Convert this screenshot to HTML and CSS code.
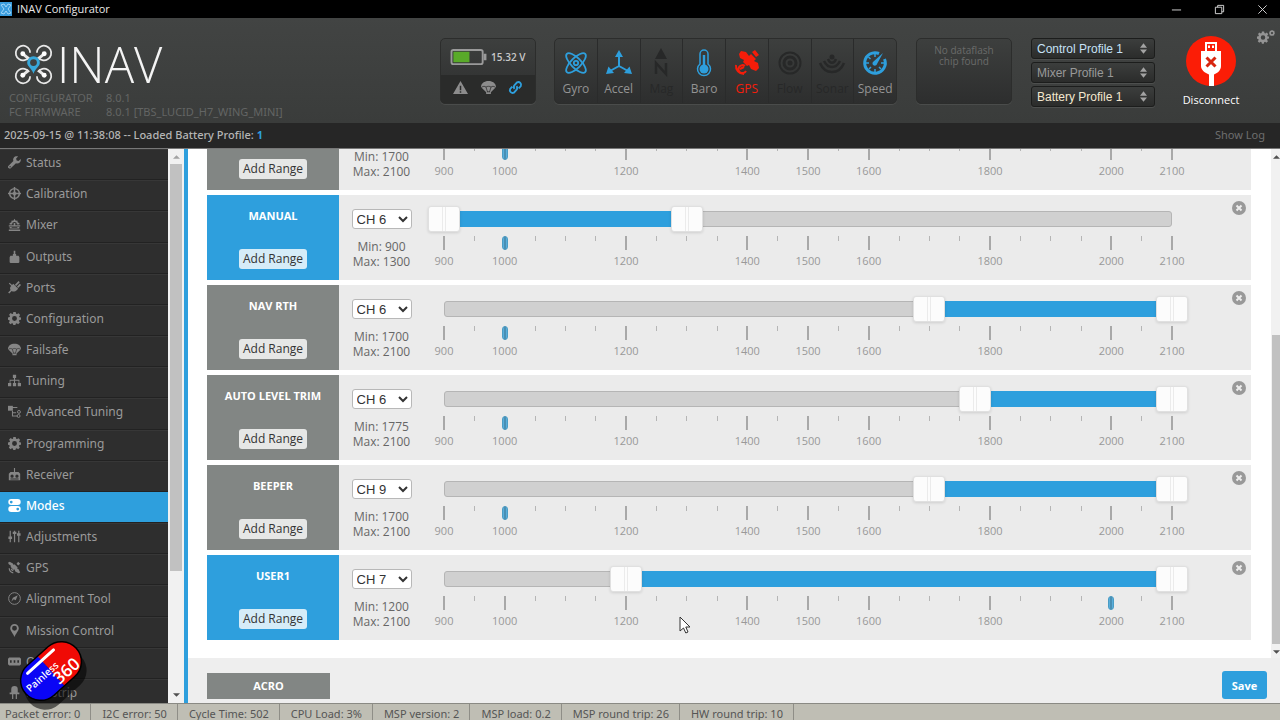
FILE: index.html
```
<!DOCTYPE html>
<html lang="en">
<head>
    <meta charset="UTF-8">
    <meta name="viewport" content="width=device-width, initial-scale=1.0">
    <title>INAV Configurator</title>
    <link rel="stylesheet" href="styles.css">
</head>
<body>
    <svg class="sprite" aria-hidden="true">
        <symbol id="i-wrench" viewBox="0 0 16 16"><path d="M15.600 3.600l-2.600 2.400-2.400-.6-.6-2.400L12.400.5C10.500-.2 8.300.3 7.100 2c-.9 1.200-1 2.700-.5 4L.7 11.900a2 2 0 0 0 0 2.900c.8.9 2.200.8 3 0L9.800 9c1.600.6 3.400.2 4.700-1 1.200-1.200 1.600-2.900 1.100-4.400zM2.600 14a.8.8 0 1 1 0-1.600.8.8 0 0 1 0 1.600z"/></symbol>
        <symbol id="i-target" viewBox="0 0 16 16"><path fill="none" stroke="currentColor" stroke-width="1.800" d="M8 2a6 6 0 1 0 0 12A6 6 0 0 0 8 2zM8 0v5M8 11v5M0 8h5M11 8h5"/><path d="M8 3.500l1.500 3 3 1.500-3 1.500-1.500 3-1.500-3-3-1.500 3-1.500z"/></symbol>
        <symbol id="i-mixer" viewBox="0 0 16 16"><path d="M2 6l2-.5L4.500 3l2 .5L8 1l1.500 2.500 2-.5.5 2.500 2 .5v2h-3a3 3 0 0 0-6 0H2zM1 9h14v1.500H1zM2 11h2l1 1h6l1-1h2v2H2zM1 14h14v2H1zM7 6h2v4H7z"/></symbol>
        <symbol id="i-motor" viewBox="0 0 16 16"><path d="M7 1h2v4h1v2h3l1 2v6l-1 1H3l-1-1V9l1-2h3V5h1z"/></symbol>
        <symbol id="i-plug" viewBox="0 0 16 16"><path d="M1 3l1-1 3 3 1.500-1.500 6 6L11 11c-2 2-4.500 2.500-6.500 1.300L1.500 15.500l-1.300-1.300 3-3C2 9 2.500 7 4 6zM8.500 4.500L13 0l1.500 1.500L10 6zM11 7l3.500-3.500L16 5l-3.500 3.500z"/></symbol>
        <symbol id="i-gear" viewBox="0 0 16 16"><path fill-rule="evenodd" d="M6.500 0h3l.4 2 1.300.6L13 1.400 15 3.600l-1.300 1.700.4 1.200 1.900.3v2.600l-2 .4-.6 1.300 1.200 1.800-2.100 2.100-1.700-1.200-1.300.6-.4 1.900H6.500l-.4-2-1.300-.5L3 15 1 12.900l1.200-1.700L1.700 10 0 9.500V6.700l2-.4.500-1.200L1.300 3.400 3.300 1.300 5 2.500l1.200-.5zM8 5a3 3 0 1 0 0 6 3 3 0 0 0 0-6z"/></symbol>
        <symbol id="i-chute" viewBox="0 0 16 16"><path d="M0 7C.3 3.500 3.500 1 8 1s7.700 2.500 8 6l-1 1.500L10.500 13v2h-5v-2L1 8.500z"/><path fill="none" stroke="#2e2e2e" stroke-width=".8" d="M1 7.500c1.500-1 3-1 4.300 0 1.500-1 4-1 5.400 0 1.300-1 2.800-1 4.300 0M5.300 7.500L7 13M10.700 7.500L9 13M6.500 12.500h3"/></symbol>
        <symbol id="i-tree" viewBox="0 0 16 16"><path d="M6 1h4v4H8.700v2H14v4h2v4h-4v-4h1V8.300H8.700V11H10v4H6v-4h1.300V8.300H3V11h1v4H0v-4h2V7h5.300V5H6z"/></symbol>
        <symbol id="i-nodes" viewBox="0 0 16 16"><path d="M0 1h6v6H0z"/><path fill="none" stroke="currentColor" stroke-width="1.300" d="M3 3h8.500M5.500 7v6.500H12M5.500 9.500H10"/><circle cx="13.500" cy="8.500" r="1.800" fill="none" stroke="currentColor" stroke-width="1.200"/><circle cx="13" cy="13.500" r="1.800" fill="none" stroke="currentColor" stroke-width="1.200"/></symbol>
        <symbol id="i-receiver" viewBox="0 0 16 16"><path fill-rule="evenodd" d="M7.300 0h1.400v5H13l2 2v8H1V7l2-2h4.300zM5 8a2 2 0 1 0 0 4 2 2 0 0 0 0-4zm6 0a2 2 0 1 0 0 4 2 2 0 0 0 0-4zM3 13v1h10v-1z"/></symbol>
        <symbol id="i-modes" viewBox="0 0 16 16"><path fill-rule="evenodd" d="M4 0h8a3.500 3.500 0 0 1 0 7.300H4A3.500 3.500 0 0 1 4 0zm0 2a1.700 1.700 0 1 0 0 3.400A1.700 1.700 0 0 0 4 2zm0 6.700h8a3.500 3.500 0 0 1 0 7.300H4a3.500 3.500 0 0 1 0-7.300zm8 2a1.700 1.700 0 1 0 0 3.400 1.700 1.700 0 0 0 0-3.400z"/></symbol>
        <symbol id="i-sliders" viewBox="0 0 16 16"><path d="M2 1h1.500v7H5v3H3.500v4H2v-4H.5V8H2zM7.300 1h1.500v1h1.500v3H8.800v10H7.300V5H5.800V2h1.500zM12.500 1H14v3h1.500v3H14v8h-1.500V7H11V4h1.500z"/></symbol>
        <symbol id="i-sat" viewBox="0 0 16 16"><path d="M2 1l4 2 1 2 1-1 4 4-1 1 2 1 2 4-2 1-4-2-1-3-1 1-4-4 1-1-3-2-1-2z"/><path fill="none" stroke="currentColor" stroke-width="1.500" d="M1.500 9a6 6 0 0 0 5 5.500M4 9.500A4 4 0 0 0 6.500 12"/><path d="M10.500 3.500l2-2.500L15 3.500l-2.500 2z"/></symbol>
        <symbol id="i-compass" viewBox="0 0 16 16"><circle cx="8" cy="8" r="7.200" fill="none" stroke="currentColor" stroke-width="1.200"/><path d="M12 4l-2.500 6L7 9l-3 3 2-5z"/></symbol>
        <symbol id="i-pin" viewBox="0 0 16 16"><path fill-rule="evenodd" d="M8 0a5.300 5.300 0 0 1 5.300 5.300C13.300 9 9.500 11.500 8 16 6.500 11.500 2.700 9 2.700 5.300A5.300 5.300 0 0 1 8 0zm0 2.300a3 3 0 1 0 0 6 3 3 0 0 0 0-6z"/></symbol>
        <symbol id="i-osd" viewBox="0 0 16 16"><path fill-rule="evenodd" d="M1.500 3h13L16 4.500v7L14.500 13h-13L0 11.500v-7zM2.500 6.500v3h2v-3zm4.500 0v3h2v-3zm4.500 0v3h2v-3z"/></symbol>
        <symbol id="i-led" viewBox="0 0 16 16"><path d="M4 8V4a4 4 0 0 1 8 0v4h2v2h-3v6H9.500v-6h-3v6H5v-6H2V8z"/></symbol>
    </svg>

    <div class="titlebar">
        <svg class="app-icon" viewBox="0 0 12 14"><rect width="12" height="14" fill="#3a9cdc"/><path d="M1 3l3-1 2 3 2-3 3 1-3 4 3 4-3 1-2-3-2 3-3-1 3-4z" fill="none" stroke="#9fd4f5"/></svg>
        <span class="app-name">INAV Configurator</span>
        <div class="window-buttons">
            <button aria-label="Minimize"><svg viewBox="0 0 12 12"><path d="M1 6.500h10"/></svg></button>
            <button aria-label="Restore"><svg viewBox="0 0 12 12"><path d="M1.500 3.500h7v7h-7zM4 3.500v-2h6.500v7h-2"/></svg></button>
            <button aria-label="Close"><svg viewBox="0 0 12 12"><path d="M1.500 1.500l9 9M10.500 1.500l-9 9"/></svg></button>
        </div>
    </div>

    <header class="header">
        <div class="brand">
            <div class="logo">
                <svg viewBox="0 0 40 40">
                    <g fill="none" stroke="#e8e8e8" stroke-width="1.800">
                        <path d="M15.500 12.500a7.500 7.500 0 1 1-3-11 7.500 7.500 0 0 1 4 6.500M24.500 12.500a7.500 7.500 0 1 0 3-11 7.500 7.500 0 0 0-4 6.500M15.500 27.500a7.500 7.500 0 1 0-3 11 7.500 7.500 0 0 0 4-6.500M24.500 27.500a7.500 7.500 0 1 1 3 11 7.500 7.500 0 0 1-4-6.500"/>
                        <path stroke-width="3" d="M9 9l6 5M31 9l-6 5M9 31l6-5M31 31l-6-5"/>
                    </g>
                    <g fill="#fff"><circle cx="9" cy="9" r="2.500"/><circle cx="31" cy="9" r="2.500"/><circle cx="9" cy="31" r="2.500"/><circle cx="31" cy="31" r="2.500"/></g>
                    <path fill="#37a8db" fill-rule="evenodd" d="M20 11.500a6.500 6.500 0 0 1 6.500 6.500c0 4-4.500 6-6.500 11.500C18 24 13.500 22 13.500 18a6.500 6.500 0 0 1 6.500-6.500zm0 3a3.500 3.500 0 1 0 0 7 3.500 3.500 0 0 0 0-7z"/>
                </svg>
                <span>INAV</span>
            </div>
            <dl class="versions">
                <dt>CONFIGURATOR</dt><dd>8.0.1</dd>
                <dt>FC FIRMWARE</dt><dd>8.0.1 [TBS_LUCID_H7_WING_MINI]</dd>
            </dl>
        </div>

        <div class="panel quad-status">
            <div class="battery">
                <svg viewBox="0 0 38 18"><rect x="1" y="1" width="33" height="15" rx="2" fill="none" stroke="#9a9a9a" stroke-width="2"/><path fill="#9a9a9a" d="M35 5h3v7h-3z"/><path fill="#59aa29" d="M3 3h17v11H3z"/></svg>
                <span>15.32 V</span>
            </div>
            <div class="flags">
                <svg viewBox="0 0 16 16"><path fill-rule="evenodd" d="M8 1l8 14H0zM7.200 6v5h1.600V6zm0 6v1.700h1.600V12z"/></svg>
                <svg><use href="#i-chute"/></svg>
                <svg class="link-ok" viewBox="0 0 16 16"><path fill="none" stroke="currentColor" stroke-width="2" d="M7 9.500a3 3 0 0 1 0-4L9.700 2.500a3 3 0 0 1 4 4L11.500 9M9 6.500a3 3 0 0 1 0 4l-2.700 3a3 3 0 0 1-4-4L4.500 7"/></svg>
            </div>
        </div>

        <ul class="panel sensors">
            <li class="on">
                <svg viewBox="0 0 24 24"><g fill="none" stroke="currentColor" stroke-width="1.800"><ellipse cx="12" cy="12" rx="13" ry="5" transform="rotate(45 12 12)"/><ellipse cx="12" cy="12" rx="13" ry="5" transform="rotate(-45 12 12)"/><circle cx="12" cy="12" r="2.200"/></g></svg>
                <span>Gyro</span>
            </li>
            <li class="on">
                <svg viewBox="0 0 24 24"><path fill="none" stroke="currentColor" stroke-width="2" d="M12 4v11M12 15L3 20M12 15l9 5"/><path d="M12-1l4 7H8zM-1 23l2.500-7.500L7 22zM25 23l-2.500-7.500L17 22z"/></svg>
                <span>Accel</span>
            </li>
            <li>
                <svg viewBox="0 0 24 24"><path d="M12-3l6 11H6z"/><path fill="none" stroke="currentColor" stroke-width="2.500" d="M7 23V12l10 11V12"/></svg>
                <span>Mag</span>
            </li>
            <li class="on">
                <svg viewBox="0 0 24 24"><path fill="none" stroke="currentColor" stroke-width="1.500" d="M8 13V3a4 4 0 0 1 8 0v10a6.500 6.500 0 1 1-8 0z"/><circle cx="12" cy="18" r="4.500"/><path d="M10.800 4h2.400v12h-2.400z"/></svg>
                <span>Baro</span>
            </li>
            <li class="error">
                <svg viewBox="0 0 24 24"><path d="M6 0l5 1 3 4 2-2 5 5-2 2 4 2 1 5-3 3-5-2-2-4-2 1-4-4 1-2-4-2-1-4zM17 1l3-2 4 5-3 2z"/><path fill="none" stroke="currentColor" stroke-width="2" d="M1 14a8 8 0 0 0 8 9M10 15a4 4 0 1 0 1 5M5 18l4-2"/></svg>
                <span>GPS</span>
            </li>
            <li>
                <svg viewBox="0 0 24 24"><g fill="none" stroke="currentColor"><circle cx="12" cy="12" r="10.500" stroke-width="2"/><circle cx="12" cy="12" r="6" stroke-width="3"/></g><circle cx="12" cy="12" r="2.500"/></svg>
                <span>Flow</span>
            </li>
            <li>
                <svg viewBox="0 0 24 24"><path fill="none" stroke="currentColor" stroke-width="2.500" d="M0 12c5 12 19 12 24 0M4 10c4 8 12 8 16 0M8 8c2 5 6 5 8 0"/><circle cx="12" cy="6" r="2.500"/></svg>
                <span>Sonar</span>
            </li>
            <li class="on">
                <svg viewBox="0 0 24 24"><path fill="none" stroke="currentColor" stroke-width="3" d="M16 2.500A10.300 10.300 0 1 0 21.500 8"/><path fill="none" stroke="currentColor" stroke-width="1.500" d="M12 3v3M3 12h3M18 12h3M5.500 6l2 2M6 18l2-2M18 18l-2-2M12 18v3"/><path d="M20 2l-6 11a2.300 2.300 0 1 1-3.500-2.500z"/></svg>
                <span>Speed</span>
            </li>
        </ul>

        <div class="panel dataflash">No dataflash<br>chip found</div>

        <div class="profiles">
            <div class="profile control">
                <select aria-label="Control profile"><option>Control Profile 1</option></select>
                <svg viewBox="0 0 8 12"><path d="M4 0l4 5H0zM0 7h8l-4 5z"/></svg>
            </div>
            <div class="profile mixer">
                <select aria-label="Mixer profile"><option>Mixer Profile 1</option></select>
                <svg viewBox="0 0 8 12"><path d="M4 0l4 5H0zM0 7h8l-4 5z"/></svg>
            </div>
            <div class="profile battery-profile">
                <select aria-label="Battery profile"><option>Battery Profile 1</option></select>
                <svg viewBox="0 0 8 12"><path d="M4 0l4 5H0zM0 7h8l-4 5z"/></svg>
            </div>
        </div>

        <button class="connect">
            <svg viewBox="0 0 50 50">
                <circle cx="25" cy="25" r="25" fill="#fb1d06"/>
                <path fill="#fff" fill-rule="evenodd" d="M19 6h12v9h4v15c0 4-3 7-7 8.500V50h-5V38.500c-4-1.500-8-4.500-8-8.500V15h4zm2 2v7h8V8zm1 1.500h2V12h-2zm4 0h2V12h-2z"/>
                <path stroke="#d8260f" stroke-width="3" d="M20.500 21.500l9 9M29.500 21.500l-9 9"/>
            </svg>
            <span>Disconnect</span>
        </button>

        <button class="options" aria-label="Options">
            <svg viewBox="0 0 18 14"><use href="#i-gear" y="1" width="12" height="13"/><use href="#i-gear" x="12" y="0" width="6" height="6"/></svg>
        </button>
    </header>

    <div class="log">
        <p>2025-09-15 @ 11:38:08 -- Loaded Battery Profile: <strong>1</strong></p>
        <a href="#">Show Log</a>
    </div>

    <div class="workspace">
        <nav class="tabs">
            <ul>
                <li><a href="#"><svg><use href="#i-wrench"/></svg>Status</a></li>
                <li><a href="#"><svg><use href="#i-target"/></svg>Calibration</a></li>
                <li><a href="#"><svg><use href="#i-mixer"/></svg>Mixer</a></li>
                <li><a href="#"><svg><use href="#i-motor"/></svg>Outputs</a></li>
                <li><a href="#"><svg><use href="#i-plug"/></svg>Ports</a></li>
                <li><a href="#"><svg><use href="#i-gear"/></svg>Configuration</a></li>
                <li><a href="#"><svg><use href="#i-chute"/></svg>Failsafe</a></li>
                <li><a href="#"><svg><use href="#i-tree"/></svg>Tuning</a></li>
                <li><a href="#"><svg><use href="#i-nodes"/></svg>Advanced Tuning</a></li>
                <li><a href="#"><svg><use href="#i-gear"/></svg>Programming</a></li>
                <li><a href="#"><svg><use href="#i-receiver"/></svg>Receiver</a></li>
                <li class="active"><a href="#"><svg><use href="#i-modes"/></svg>Modes</a></li>
                <li><a href="#"><svg><use href="#i-sliders"/></svg>Adjustments</a></li>
                <li><a href="#"><svg><use href="#i-sat"/></svg>GPS</a></li>
                <li><a href="#"><svg><use href="#i-compass"/></svg>Alignment Tool</a></li>
                <li><a href="#"><svg><use href="#i-pin"/></svg>Mission Control</a></li>
                <li><a href="#"><svg><use href="#i-osd"/></svg>OSD</a></li>
                <li><a href="#"><svg><use href="#i-led"/></svg>LED Strip</a></li>
            </ul>
        </nav>
        <div class="scrollbar tabs-scroll">
            <svg viewBox="0 0 8 4"><path d="M0 4l4-4 4 4z"/></svg>
            <div class="scroll-thumb"></div>
            <svg viewBox="0 0 8 4"><path d="M0 0h8L4 4z"/></svg>
        </div>

        <main class="content">
            <div class="content-scroll">
                <div id="modes" class="modes"></div>
                <div class="scrollbar content-bar">
                    <svg viewBox="0 0 8 4"><path d="M0 4l4-4 4 4z"/></svg>
                    <div class="scroll-thumb"></div>
                    <svg viewBox="0 0 8 4"><path d="M0 0h8L4 4z"/></svg>
                </div>
            </div>
            <div class="toolbar">
                <div class="acro">ACRO</div>
                <button class="save">Save</button>
            </div>
        </main>
    </div>

    <footer class="status-bar">
        <span>Packet error: 0</span>
        <span>I2C error: 50</span>
        <span>Cycle Time: 502</span>
        <span>CPU Load: 3%</span>
        <span>MSP version: 2</span>
        <span>MSP load: 0.2</span>
        <span>MSP round trip: 26</span>
        <span>HW round trip: 10</span>
    </footer>

    <svg class="pill" viewBox="0 0 72 72">
        <g transform="rotate(-42 31 31)">
            <rect x="-6" y="20" width="69" height="41" rx="20" fill="#000" opacity=".55"/>
            <path fill="#f00a05" d="M31 11h14a20 20 0 0 1 0 40H31z"/>
            <path fill="#0a05f5" d="M31 11H17a20 20 0 0 0 0 40h14z"/>
            <rect x="-3" y="11" width="68" height="40" rx="20" fill="none" stroke="#000" stroke-width="1.500"/>
            <path stroke="#fff" stroke-width="3" stroke-linecap="round" d="M12 17h35"/>
            <text x="1" y="33" class="pill-name">Painless</text>
            <text x="28" y="47" class="pill-number">360</text>
        </g>
    </svg>

    <svg class="cursor" viewBox="0 0 12 18"><path d="M1 1v14l3.500-3 2.300 5 2.200-1-2.200-5H11z" fill="#fff" stroke="#333"/></svg>

    <script>
        const MIN = 900;
        const MAX = 2100;
        const labels = [900, 1000, 1200, 1400, 1500, 1600, 1800, 2000, 2100];

        const modes = [
            { name: 'NAV POSHOLD', channel: 6, min: 1700, max: 2100, value: 1000, active: false },
            { name: 'MANUAL', channel: 6, min: 900, max: 1300, value: 1000, active: true },
            { name: 'NAV RTH', channel: 6, min: 1700, max: 2100, value: 1000, active: false },
            { name: 'AUTO LEVEL TRIM', channel: 6, min: 1775, max: 2100, value: 1000, active: false },
            { name: 'BEEPER', channel: 9, min: 1700, max: 2100, value: 1000, active: false },
            { name: 'USER1', channel: 7, min: 1200, max: 2100, value: 2000, active: true }
        ];

        // Position of a channel value along the track, in percent
        function percent(value) {
            return (value - MIN) / (MAX - MIN) * 100;
        }

        function ticks() {
            let html = '';
            for (let v = MIN; v <= MAX; v += 50) {
                const labelled = labels.includes(v);
                html += `<span class="tick${labelled ? ' major' : ''}" style="left:${percent(v)}%">${labelled ? v : ''}</span>`;
            }
            return html;
        }

        document.getElementById('modes').innerHTML = modes.map(mode => `
            <section class="mode${mode.active ? ' active' : ''}">
                <div class="mode-name">
                    <h2>${mode.name}</h2>
                    <button class="add-range">Add Range</button>
                </div>
                <div class="channel">
                    <select aria-label="${mode.name} channel"><option>CH ${mode.channel}</option></select>
                    <p>Min: ${mode.min}<br>Max: ${mode.max}</p>
                </div>
                <div class="range">
                    <div class="track">
                        <div class="fill" style="left:${percent(mode.min)}%;width:${percent(mode.max) - percent(mode.min)}%"></div>
                        <input type="range" aria-label="${mode.name} minimum" min="${MIN}" max="${MAX}" step="25" value="${mode.min}">
                        <input type="range" aria-label="${mode.name} maximum" min="${MIN}" max="${MAX}" step="25" value="${mode.max}">
                    </div>
                    <div class="scale">
                        ${ticks()}
                        <span class="marker" style="left:${percent(mode.value)}%"></span>
                    </div>
                </div>
                <button class="remove" aria-label="Remove range">
                    <svg viewBox="0 0 14 14"><circle cx="7" cy="7" r="7" fill="#999"/><path d="M4.500 4.500l5 5M9.500 4.500l-5 5" stroke="#eee" stroke-width="2"/></svg>
                </button>
            </section>
        `).join('');
    </script>
</body>
</html>
```
FILE: styles.css
```
:root {
    --blue: #2e9fdd;
    --dark: #2e2e2e;
    --grey: #828684;
    --row: #ebebeb;
}

* {
    margin: 0;
    padding: 0;
    box-sizing: border-box;
}

body {
    display: flex;
    flex-direction: column;
    height: 100vh;
    overflow: hidden;
    font-family: "Open Sans", "Noto Sans", sans-serif;
    font-size: 12px;
    color: #666;
    background-color: #fff;
}

button {
    font-family: inherit;
    font-size: 12px;
    border: none;
    background: none;
    cursor: pointer;
}

a {
    color: inherit;
    text-decoration: none;
}

ul {
    list-style: none;
}

svg {
    display: block;
    fill: currentColor;
    overflow: visible;
}

.sprite {
    position: absolute;
    width: 0;
    height: 0;
}

.versions,
.log,
.tabs,
.status-bar {
    font-family: "Noto Sans", "Open Sans", sans-serif;
}

/* Window title bar */
.titlebar {
    display: flex;
    align-items: center;
    flex: none;
    height: 18px;
    background-color: #000;
    color: #e8e8e8;
}

.app-icon {
    width: 12px;
    height: 14px;
    margin-right: 5px;
}

.app-name {
    flex: 1;
    font-size: 11px;
    line-height: 16px;
}

.window-buttons {
    display: flex;
    gap: 32px;
    padding-right: 12px;
}

.window-buttons button {
    width: 11px;
    height: 16px;
    color: #ddd;
}

.window-buttons svg {
    width: 11px;
    height: 11px;
    fill: none;
    stroke: currentColor;
}

/* Header */
.header {
    display: flex;
    align-items: flex-start;
    flex: none;
    height: 105px;
    padding: 20px 5px 0 9px;
    background: linear-gradient(#424443, #3a3c3b);
}

.brand {
    flex: 1;
}

.logo {
    display: flex;
    align-items: center;
    gap: 4px;
    height: 53px;
    padding-left: 5px;
    color: #f4f4f4;
    font-size: 49px;
    font-weight: 300;
    line-height: 53px;
}

.logo svg {
    width: 39px;
    height: 39px;
}

.versions {
    display: grid;
    grid-template-columns: 97px 1fr;
    font-size: 11px;
    line-height: 14px;
    color: #636564;
}

.panel {
    height: 66px;
    border: 1px solid #2c2d2c;
    border-radius: 5px;
    background: linear-gradient(#3d3f3e, #2d2e2e);
    box-shadow: 0 1px 0 #4a4c4b;
}

.quad-status {
    display: flex;
    flex-direction: column;
    width: 96px;
    margin-right: 18px;
    overflow: hidden;
}

.battery {
    display: flex;
    align-items: center;
    gap: 4px;
    height: 36px;
    padding-left: 9px;
    color: #c9c9c9;
    font-size: 10px;
    font-weight: 600;
}

.battery svg {
    width: 37px;
    height: 17px;
}

.flags {
    display: flex;
    align-items: center;
    justify-content: space-evenly;
    flex: 1;
    padding-bottom: 4px;
    background-color: #2a2b2a;
    color: #8c8c8c;
}

.flags svg {
    width: 15px;
    height: 15px;
}

.flags .link-ok {
    color: var(--blue);
}

.sensors {
    display: flex;
    width: 343px;
    margin-right: 19px;
}

.sensors li {
    display: flex;
    flex-direction: column;
    align-items: center;
    flex: 1;
    gap: 6px;
    padding-top: 12px;
    border-right: 1px solid #2a2b2b;
    color: #272828;
    line-height: 16px;
}

.sensors li:last-child {
    border-right: none;
}

.sensors svg {
    width: 24px;
    height: 24px;
}

.sensors .on svg {
    color: var(--blue);
}

.sensors .on span {
    color: #949494;
}

.sensors .error {
    color: #f51d0a;
}

.dataflash {
    width: 96px;
    margin-right: 19px;
    padding-top: 6px;
    color: #6a6b6a;
    font-size: 10px;
    line-height: 11px;
    text-align: center;
}

.profiles {
    display: flex;
    flex-direction: column;
    gap: 3px;
    width: 124px;
    margin-right: 19px;
}

.profile {
    position: relative;
    color: #a3a3a3;
}

.profile select {
    display: block;
    width: 100%;
    height: 21px;
    padding-left: 5px;
    appearance: none;
    border: 1px solid #1c1d1c;
    border-radius: 3px;
    background: linear-gradient(#3c3e3d, #2b2c2b);
    box-shadow: 0 1px 0 #4d4f4e;
    color: #999;
    font-family: "Liberation Sans", sans-serif;
    font-size: 12px;
}

.control select {
    color: #c6e2f7;
}

.battery-profile select {
    color: #f4e8cf;
}

.profile svg {
    position: absolute;
    top: 5px;
    right: 8px;
    width: 7px;
    height: 11px;
    pointer-events: none;
}

.connect {
    display: flex;
    flex-direction: column;
    align-items: center;
    gap: 6px;
    width: 74px;
    margin-top: -2px;
    color: #fff;
    font-size: 11px;
    line-height: 16px;
}

.connect svg {
    width: 50px;
    height: 50px;
}

.options {
    margin: -8px 0 0 9px;
    color: #949494;
}

.options svg {
    width: 18px;
    height: 14px;
}

/* Log line */
.log {
    display: flex;
    align-items: center;
    justify-content: space-between;
    flex: none;
    height: 26px;
    padding: 0 15px 2px 4px;
    border-bottom: 1px solid #777;
    background-color: #262626;
    color: #b5b5b5;
    font-size: 11px;
    font-weight: 500;
}

.log strong {
    color: var(--blue);
}

.log a {
    color: #6e6e6e;
    font-weight: 400;
}

/* Sidebar */
.workspace {
    display: flex;
    flex: 1;
    min-height: 0;
}

.tabs {
    width: 168px;
    overflow: hidden;
    background-color: var(--dark);
}

.tabs ul {
    display: flex;
    flex-direction: column;
    height: 561px;
}

.tabs li {
    flex: 1;
    border-bottom: 1px solid #222;
    box-shadow: inset 0 1px 0 #373737;
    color: #9a9a9a;
}

.tabs .active {
    background-color: var(--blue);
    box-shadow: none;
    color: #fff;
    font-weight: 500;
}

.tabs a {
    display: flex;
    align-items: center;
    gap: 5px;
    height: 100%;
    padding: 0 0 3px 8px;
}

.tabs svg {
    width: 13px;
    height: 13px;
    color: #858585;
}

.tabs .active svg {
    color: #fff;
}

.scrollbar {
    display: flex;
    flex-direction: column;
    align-items: center;
    justify-content: space-between;
    flex: none;
    background-color: #f1f1f1;
    color: #505050;
}

.scrollbar svg {
    width: 7px;
    height: 4px;
}

.scroll-thumb {
    align-self: stretch;
    background-color: #c1c1c1;
}

.tabs-scroll {
    width: 16px;
    padding: 6px 2px;
}

.tabs-scroll .scroll-thumb {
    height: 75%;
    margin: 5px 0 auto;
}

.tabs-scroll svg:first-child {
    color: #a3a3a3;
}

/* Modes tab */
.content {
    display: flex;
    flex-direction: column;
    flex: 1;
    min-width: 0;
    border-left: 4px solid var(--blue);
}

.content-scroll {
    display: flex;
    flex: 1;
    min-height: 0;
}

.content-bar {
    width: 9px;
    padding: 6px 0 4px 1px;
    overflow: hidden;
}

.content-bar .scroll-thumb {
    height: 62%;
    margin: auto 0 6px;
}

.modes {
    display: flex;
    flex-direction: column;
    justify-content: flex-end;
    flex: 1;
    gap: 5px;
    min-width: 0;
    padding: 0 20px 18px 19px;
    overflow: hidden;
}

.mode {
    position: relative;
    display: flex;
    flex: none;
    height: 85px;
    background-color: var(--row);
}

.mode-name {
    display: flex;
    flex-direction: column;
    align-items: center;
    justify-content: space-between;
    width: 132px;
    padding: 13px 0 11px;
    background-color: var(--grey);
}

.mode.active .mode-name {
    background-color: var(--blue);
}

.mode-name h2 {
    color: #fff;
    font-size: 11px;
    font-weight: 700;
    line-height: 16px;
}

.add-range {
    height: 20px;
    padding: 0 4px;
    border-radius: 3px;
    background-color: rgba(255, 255, 255, 0.8);
    color: #333;
    line-height: 20px;
}

.channel {
    display: flex;
    flex-direction: column;
    align-items: center;
    gap: 10px;
    width: 85px;
    padding-top: 14px;
    line-height: 15px;
    text-align: center;
}

.channel select {
    width: 60px;
    height: 20px;
    border: 1px solid #b8b8b8;
    border-radius: 3px;
    background-color: #fff;
    color: #333;
    font-family: "Liberation Sans", sans-serif;
    font-size: 13px;
}

.range {
    flex: 1;
    padding: 16px 79px 0 20px;
}

.track {
    position: relative;
    height: 16px;
    border: 1px solid #b5b5b5;
    border-radius: 3px;
    background-color: #d0d0d0;
}

.fill {
    position: absolute;
    top: -1px;
    height: 16px;
    background-color: var(--blue);
}

/* both handles share one track, so only the thumbs take the pointer */
.track input {
    position: absolute;
    top: -7px;
    left: -17px;
    width: calc(100% + 34px);
    height: 27px;
    appearance: none;
    background: none;
    pointer-events: none;
}

.track input::-webkit-slider-thumb {
    width: 32px;
    height: 26px;
    appearance: none;
    border: 1px solid #e0e0e0;
    border-radius: 3px;
    background: linear-gradient(90deg, transparent 13px, #ebebeb 13px, #ebebeb 14px, transparent 14px, transparent 16px, #ebebeb 16px, #ebebeb 17px, transparent 17px), #fcfcfc;
    box-shadow: 0 1px 3px rgba(0, 0, 0, 0.12);
    pointer-events: auto;
}

.scale {
    position: relative;
    height: 36px;
    margin-top: 9px;
}

.tick {
    position: absolute;
    display: flex;
    flex-direction: column;
    align-items: center;
    width: 40px;
    margin-left: -20px;
    color: #999;
    font-size: 11px;
    line-height: 16px;
}

.tick::before {
    content: "";
    width: 1px;
    height: 5px;
    background-color: #b5b5b5;
}

.tick.major::before {
    width: 2px;
    height: 14px;
    margin-bottom: 3px;
    background-color: #a8a8a8;
}

.marker {
    position: absolute;
    top: 0;
    width: 6px;
    height: 14px;
    margin-left: -3px;
    border: 1px solid #4a9cc4;
    border-radius: 3px;
    background: linear-gradient(90deg, #5aaedb 25%, #4a8fb3 25%, #4a8fb3 75%, #5aaedb 75%);
}

.remove {
    position: absolute;
    top: 6px;
    right: 5px;
    width: 14px;
    height: 14px;
}

.toolbar {
    display: flex;
    justify-content: space-between;
    flex: none;
    padding: 13px 13px 4px 19px;
    background-color: #eee;
}

.acro {
    width: 123px;
    margin-top: 2px;
    background-color: var(--grey);
    color: #fff;
    font-size: 11px;
    font-weight: 700;
    line-height: 26px;
    text-align: center;
}

.save {
    width: 45px;
    height: 28px;
    border-radius: 3px;
    background-color: var(--blue);
    color: #fff;
    font-size: 11px;
    font-weight: 700;
}

/* Status bar */
.status-bar {
    display: flex;
    flex: none;
    height: 17px;
    overflow: hidden;
    border-top: 1px solid #8a8a84;
    background-color: #bfbeb4;
    color: #555;
    font-size: 11px;
    line-height: 19px;
}

.status-bar span {
    padding: 0 10px 0 11px;
    border-right: 1px solid #8f8e87;
}

.status-bar span:first-child {
    padding-left: 5px;
}

/* Overlays */
.pill {
    position: absolute;
    left: 20px;
    bottom: 8px;
    width: 72px;
    height: 72px;
}

.pill-name {
    fill: #fff;
    font-size: 10px;
    font-weight: 600;
}

.pill-number {
    fill: #fff;
    font-size: 17px;
    font-weight: 600;
}

.cursor {
    position: absolute;
    top: 616px;
    left: 679px;
    width: 12px;
    height: 18px;
    pointer-events: none;
}
```
